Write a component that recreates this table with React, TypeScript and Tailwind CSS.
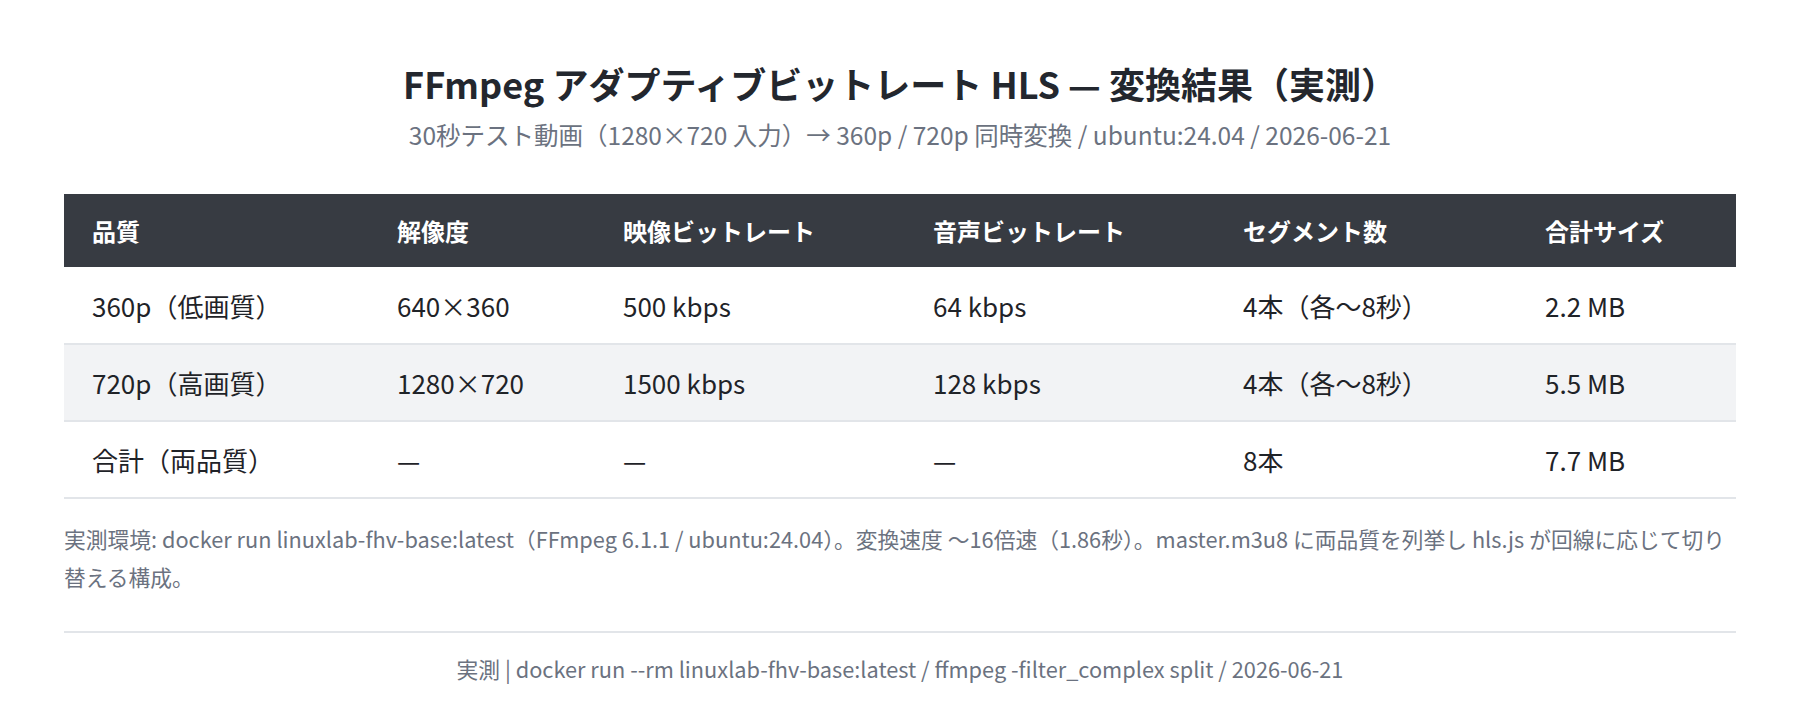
import React from "react";

const font = { fontFamily: '"Noto Sans CJK JP", "Noto Sans", sans-serif' };

const cols = ["w-[305px]", "w-[226px]", "w-[310px]", "w-[310px]", "w-[302px]", "w-[219px]"];

const header = ["品質", "解像度", "映像ビットレート", "音声ビットレート", "セグメント数", "合計サイズ"];
const rows = [
  ["360p（低画質）", "640×360", "500 kbps", "64 kbps", "4本（各〜8秒）", "2.2 MB"],
  ["720p（高画質）", "1280×720", "1500 kbps", "128 kbps", "4本（各〜8秒）", "5.5 MB"],
  ["合計（両品質）", "—", "—", "—", "8本", "7.7 MB"],
];

export default function App() {
  return (
    <div className="w-[1800px] h-[726px] bg-white px-[64px] pt-[59px] text-[#1f2328]" style={font}>
      <h1 className="text-center text-[36px] font-bold leading-[48px] text-[#23272e]">
        FFmpeg アダプティブビットレート HLS — 変換結果（実測）
      </h1>
      <p className="mt-[12px] text-center text-[24.5px] leading-[32px] text-[#6b7280]">
        30秒テスト動画（1280×720 入力）→ 360p / 720p 同時変換 / ubuntu:24.04 / 2026-06-21
      </p>
      <table className="mt-[43px] w-full border-collapse">
        <thead>
          <tr className="bg-[#373b42] text-white h-[73px] text-[24px]">
            {header.map((h, i) => (
              <th key={i} className={`${cols[i]} text-left font-bold pl-[28px]`}>
                {h}
              </th>
            ))}
          </tr>
        </thead>
        <tbody className="text-[26px]">
          {rows.map((r, ri) => (
            <tr
              key={ri}
              className={`h-[77px] border-b-2 border-[#e2e5e9] ${ri === 1 ? "bg-[#f2f3f5]" : "bg-white"}`}
            >
              {r.map((c, ci) => (
                <td key={ci} className="pl-[28px] text-[#1f2328]">
                  {c}
                </td>
              ))}
            </tr>
          ))}
        </tbody>
      </table>
      <p className="mt-[21px] text-[21.75px] leading-[38px] text-[#6b7280]">
        実測環境: docker run linuxlab-fhv-base:latest（FFmpeg 6.1.1 / ubuntu:24.04）。変換速度 〜16倍速（1.86秒）。master.m3u8 に両品質を列挙し hls.js が回線に応じて切り替える構成。
      </p>
      <div className="mt-[35px] border-t-2 border-[#e2e5e9] pt-[20px] text-center text-[21.75px] leading-[32px] text-[#6b7280]">
        実測 | docker run --rm linuxlab-fhv-base:latest / ffmpeg -filter_complex split / 2026-06-21
      </div>
    </div>
  );
}
